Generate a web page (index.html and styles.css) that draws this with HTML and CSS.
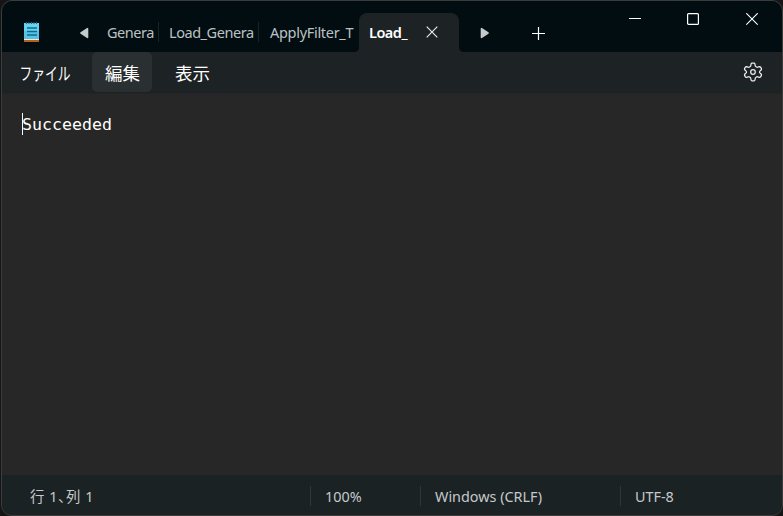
FILE: index.html
```html
<!DOCTYPE html>
<html lang="ja">
<head>
<meta charset="utf-8">
<title>Notepad</title>
<link rel="stylesheet" href="styles.css">
</head>
<body>
<div class="window">
  <header class="titlebar">
    <svg class="app-icon" width="16" height="20" viewBox="0 0 16 20">
      <path d="M0 17h15v2H0z" fill="#f1e6dc"/>
      <path d="M0 18h15v2H0z" fill="#b65f17"/>
      <path d="M0 1h15v16H0z" fill="#68d1ec"/>
      <path d="M0 9h15v8H0z" fill="#42b8dc" opacity=".5"/>
      <path d="M2.5 0v2M5 0v2M7.5 0v2M10 0v2M12.5 0v2" stroke="#14698b" stroke-width="1.1"/>
      <path d="M3 6h10M3 9.5h10M3 13h10" stroke="#0b6c90" stroke-width="1.6"/>
    </svg>
    <svg class="scroll-back" width="9" height="12" viewBox="0 0 9 12"><path d="M1 6 7.5 1.6v8.8z" fill="#c5cacb" stroke="#c5cacb" stroke-width="1.6" stroke-linejoin="round"/></svg>
    <nav class="tabs">
      <div class="tab first"><span class="label">Genera</span></div>
      <div class="tab"><span class="label">Load_Genera</span></div>
      <div class="tab last"><span class="label">ApplyFilter_T</span></div>
      <div class="tab active"><span class="label">Load_</span>
        <svg width="12" height="12" viewBox="0 0 12 12"><path d="M.7.7l10.6 10.6M11.3.7.7 11.3" stroke="#eef0f0" stroke-width="1.1"/></svg>
      </div>
    </nav>
    <svg class="scroll-next" width="9" height="12" viewBox="0 0 9 12"><path d="M8 6 1.5 1.6v8.8z" fill="#c5cacb" stroke="#c5cacb" stroke-width="1.6" stroke-linejoin="round"/></svg>
    <svg class="new-tab" width="13" height="13" viewBox="0 0 13 13"><path d="M0 6.5h13M6.5 0v13" stroke="#fff" stroke-width="1.2"/></svg>
    <div class="controls">
      <svg width="12" height="13" viewBox="0 0 12 13"><path d="M0 5.5h12" stroke="#fff"/></svg>
      <svg width="12" height="13" viewBox="0 0 12 13"><rect x=".6" y=".6" width="10.8" height="10.8" rx="1" fill="none" stroke="#fff" stroke-width="1.2"/></svg>
      <svg class="close" width="12" height="13" viewBox="0 0 12 13"><path d="M.3.3l11.4 11.4M11.7.3.3 11.7" stroke="#fff" stroke-width="1.2"/></svg>
    </div>
  </header>
  <div class="menubar">
    <span class="menu kana"><span>ファイル</span></span>
    <span class="menu hover">編集</span>
    <span class="menu">表示</span>
    <svg class="gear" width="20" height="20" viewBox="0 0 20 20" fill="none" stroke="#e9ecec" stroke-width="1.25" stroke-linejoin="round">
      <path d="M7.7 3.8 8.1 1.9Q8.3 1.3 9 1.2h2q.7.1.9.7l.4 1.9q.1.6 1.1 1.2.7.4 1.3.2l1.8-.6q.7-.1 1.1.5l.8 1.5q.3.7-.1 1.2l-1.4 1.3q-.4.5-.4.9t.4.9l1.4 1.3q.4.5.1 1.2l-.8 1.5q-.4.6-1.1.5l-1.8-.6q-.6-.2-1.3.2-1 .6-1.1 1.2l-.4 1.9q-.2.6-.9.7H9q-.7-.1-.9-.7l-.4-1.9q-.1-.6-1.1-1.2-.7-.4-1.3-.2l-1.8.6q-.7.1-1.1-.5l-.8-1.5q-.3-.7.1-1.2l1.4-1.3q.4-.5.4-.9t-.4-.9L1.7 7.8q-.4-.5-.1-1.2l.8-1.5q.4-.6 1.1-.5l1.8.6q.6.2 1.3-.2 1-.6 1.1-1.2z"/>
      <circle cx="10" cy="10" r="2.3"/>
    </svg>
  </div>
  <main class="editor"><span class="caret"></span><span class="text">Succeeded</span></main>
  <footer class="status">
    <span class="cell position">行 1、列 1</span>
    <span class="cell zoom">100%</span>
    <span class="cell ending">Windows (CRLF)</span>
    <span class="cell encoding">UTF-8</span>
  </footer>
</div>
</body>
</html>
```
FILE: styles.css
```css
* { box-sizing: border-box; }
body {
  margin: 0;
  height: 516px;
  overflow: hidden;
  padding-left: 1px;
  background: #151515;
  font-family: "Noto Sans", "Noto Sans CJK JP", sans-serif;
}
svg { display: block; flex: none; }
.window {
  width: 782px;
  height: 516px;
  display: flex;
  flex-direction: column;
  border: 1px solid #3b3c3c;
  border-radius: 11px;
  overflow: hidden;
  background: #272727;
}
.titlebar {
  height: 51px;
  flex: none;
  display: flex;
  background: #010d11;
}
.app-icon { margin: 21px 0 0 22px; }
.scroll-back { margin: 26px 0 0 40px; }
.tabs { display: flex; margin: 12px 0 0 9px; }
.tab {
  width: 100px;
  height: 39px;
  display: flex;
  align-items: center;
  position: relative;
  padding-left: 10px;
  color: #bcc2c3;
  font-size: 14.5px;
}
.tab.first { width: 61px; padding-left: 9px; }
.tab.last { padding-left: 11px; }
.tab:not(.active)::after {
  content: "";
  position: absolute;
  right: 0;
  top: 9px;
  height: 20px;
  width: 1px;
  background: #182427;
}
.tab.last::after { display: none; }
.tab .label {
  width: 85px;
  white-space: nowrap;
  line-height: 24px;
  padding-bottom: 2px;
  letter-spacing: -.45px;
}
.tab.first .label { width: 46px; }
.tab.last .label { letter-spacing: -.3px; }
.tab.active {
  background: #1d2224;
  color: #fff;
  font-weight: 600;
  border-radius: 8px 8px 0 0;
}
.tab.active .label { width: 57px; letter-spacing: -.5px; }
.tab.active svg { margin-bottom: 1px; }
.tab.active::before, .tab.active::after {
  content: "";
  position: absolute;
  top: auto;
  bottom: 0;
  width: 4px;
  height: 4px;
}
.tab.active::before { left: -4px; background: radial-gradient(circle at 0 0, transparent 3.5px, #1d2224 4px); }
.tab.active::after { right: -4px; background: radial-gradient(circle at 100% 0, transparent 3.5px, #1d2224 4px); }
.scroll-next { margin: 26px 0 0 21px; }
.new-tab { margin: 26px 0 0 43px; }
.controls {
  display: flex;
  gap: 46px;
  margin: 12px 24px 0 auto;
}
.controls .close { margin-left: 1px; }
.menubar {
  height: 42px;
  flex: none;
  display: flex;
  align-items: flex-start;
  padding-left: 7px;
  background: #1d2224;
  border-bottom: 1px solid #202526;
  color: #fff;
}
.menu {
  width: 60px;
  height: 40px;
  margin-right: 10px;
  border-radius: 5px;
  font-size: 17.5px;
  line-height: 42px;
  text-align: center;
  white-space: nowrap;
  padding-left: 1px;
}
.menu.kana { width: 73px; }
.kana span {
  display: block;
  width: 70px;
  transform: scaleX(.73);
}
.menu.hover { background: #2a2f31; }
.gear { margin: 10px 19px 0 auto; }
.editor {
  flex: 1;
  display: flex;
  align-items: flex-start;
  padding: 19px 0 0 20px;
  background: #272727;
  color: #fff;
  font-family: "DejaVu Sans Mono", monospace;
  font-size: 16.6px;
  line-height: 24px;
}
.caret { width: 1px; height: 22px; margin-right: -1px; background: #fff; }
.status {
  height: 40px;
  flex: none;
  display: flex;
  padding-top: 11px;
  background: #1b2224;
  color: #c5c9ca;
  font-size: 14.4px;
}
.cell {
  height: 20px;
  line-height: 22px;
  padding-left: 14px;
  border-left: 1px solid #30373a;
  white-space: nowrap;
}
.position {
  width: 308px;
  padding-left: 28px;
  border-left: 0;
  font-feature-settings: "palt";
  letter-spacing: .6px;
}
.zoom { width: 110px; }
.ending { width: 200px; }
.encoding { flex: 1; }
```
